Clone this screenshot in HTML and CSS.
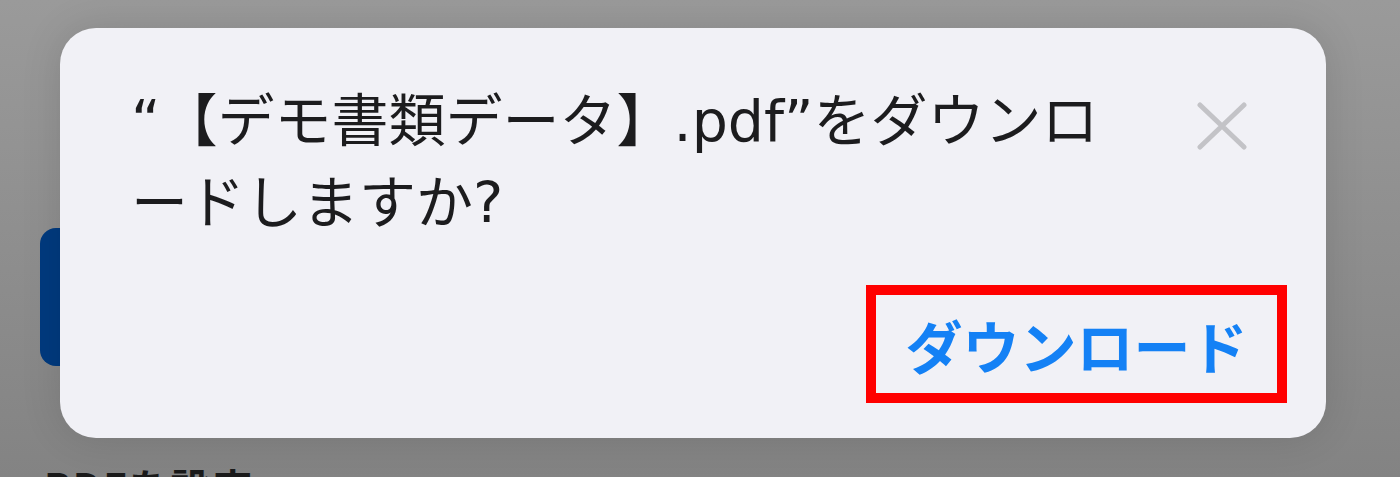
FILE: index.html
```html
<!DOCTYPE html>
<html lang="ja">
<head>
    <meta charset="UTF-8">
    <meta name="viewport" content="width=device-width, initial-scale=1.0">
    <title>ダウンロード確認</title>
    <link rel="stylesheet" href="styles.css">
</head>
<body>
    <div class="page">
        <div class="page-button"></div>
        <h2 class="page-heading">PDFを設定</h2>
    </div>

    <div class="dialog">
        <div class="dialog-head">
            <p class="dialog-message">“【デモ書類データ】.pdf”をダウンロードしますか?</p>
            <button class="close-btn" aria-label="閉じる">
                <svg width="50" height="48" viewBox="0 0 50 48">
                    <path d="M3 3 L47 45 M47 3 L3 45" stroke="#c3c3c7" stroke-width="5" stroke-linecap="round" fill="none"/>
                </svg>
            </button>
        </div>
        <div class="dialog-actions">
            <button class="download-btn">ダウンロード</button>
        </div>
    </div>
</body>
</html>
```

FILE: styles.css
```css
body {
    margin: 0;
    height: 477px;
    overflow: hidden;
    font-family: "Noto Sans CJK JP", sans-serif;
    background: linear-gradient(180deg, #9a9a9a, #838383);
}
.page {
    padding-left: 40px;
    padding-top: 228px;
}
.page-button {
    width: 1200px;
    height: 138px;
    background-color: #003a7e;
    border-radius: 16px;
}
.page-heading {
    margin: 96px 0 0 4px;
    font-size: 40px;
    line-height: 48px;
    font-weight: 700;
    color: #1a1a1a;
    letter-spacing: 2px;
}
.dialog {
    position: absolute;
    left: 60px;
    top: 28px;
    width: 1266px;
    height: 410px;
    box-sizing: border-box;
    padding: 52px 39px 35px 71px;
    background-color: #f1f1f6;
    border-radius: 36px;
    box-shadow: 0 0 40px rgba(0, 0, 0, 0.12);
    display: flex;
    flex-direction: column;
}
.dialog-head {
    display: flex;
    justify-content: space-between;
    align-items: flex-start;
}
.dialog-message {
    margin: 0;
    width: 995px;
    font-family: "DejaVu Sans", "Noto Sans CJK JP", sans-serif;
    font-size: 57px;
    line-height: 82px;
    color: #1c1c1e;
    text-spacing-trim: space-all;
}
.close-btn {
    margin: 22px 40px 0 0;
    padding: 0;
    border: none;
    background: none;
    line-height: 0;
}
.dialog-actions {
    display: flex;
    justify-content: flex-end;
    margin-top: auto;
}
.download-btn {
    width: 421px;
    height: 118px;
    box-sizing: border-box;
    border: 10px solid #ff0000;
    background: none;
    font-family: "Noto Sans CJK JP", sans-serif;
    font-size: 57px;
    font-weight: 700;
    color: #1481f5;
    padding: 0;
}
```
